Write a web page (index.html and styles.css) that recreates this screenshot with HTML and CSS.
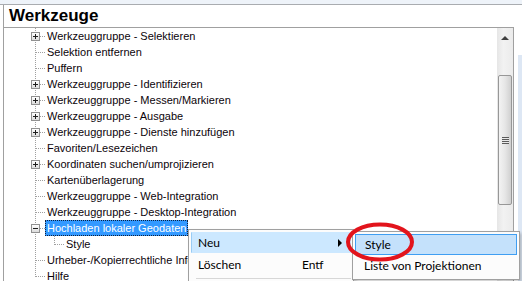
FILE: index.html
```html
<!DOCTYPE html>
<html>
<head>
<meta charset="utf-8">
<link rel="stylesheet" href="styles.css">
</head>
<body>
<div class="window">
  <div class="panel">
    <div class="title">Werkzeuge</div>
    <div class="treebox">
      <ul class="tree">
        <li class="row"><span class="conn"><span class="box plus"></span></span><span class="label">Werkzeuggruppe - Selektieren</span></li>
        <li class="row"><span class="conn"></span><span class="label">Selektion entfernen</span></li>
        <li class="row"><span class="conn"></span><span class="label">Puffern</span></li>
        <li class="row"><span class="conn"><span class="box plus"></span></span><span class="label">Werkzeuggruppe - Identifizieren</span></li>
        <li class="row"><span class="conn"><span class="box plus"></span></span><span class="label">Werkzeuggruppe - Messen/Markieren</span></li>
        <li class="row"><span class="conn"><span class="box plus"></span></span><span class="label">Werkzeuggruppe - Ausgabe</span></li>
        <li class="row"><span class="conn"><span class="box plus"></span></span><span class="label">Werkzeuggruppe - Dienste hinzufügen</span></li>
        <li class="row"><span class="conn"></span><span class="label">Favoriten/Lesezeichen</span></li>
        <li class="row"><span class="conn"><span class="box plus"></span></span><span class="label">Koordinaten suchen/umprojizieren</span></li>
        <li class="row"><span class="conn"></span><span class="label">Kartenüberlagerung</span></li>
        <li class="row"><span class="conn"></span><span class="label">Werkzeuggruppe - Web-Integration</span></li>
        <li class="row"><span class="conn"></span><span class="label">Werkzeuggruppe - Desktop-Integration</span></li>
        <li class="row"><span class="conn"><span class="box minus"></span></span><span class="label selected">Hochladen lokaler Geodaten</span></li>
        <li class="row"><span class="indent"></span><span class="conn last"></span><span class="label">Style</span></li>
        <li class="row"><span class="conn"></span><span class="label">Urheber-/Kopierrechtliche Informationen</span></li>
        <li class="row"><span class="conn last"></span><span class="label">Hilfe</span></li>
      </ul>
      <div class="scrollbar">
        <div class="sb-btn"><span class="sb-arrow"></span></div>
        <div class="sb-track"><div class="sb-thumb"><span class="grip"></span></div></div>
      </div>
    </div>
  </div>
  <div class="side"></div>
</div>

<div class="menu menu-main">
  <div class="item hot"><span class="text">Neu</span><span class="key"></span><span class="arrow"></span></div>
  <div class="item"><span class="text">Löschen</span><span class="key">Entf</span><span class="arrow none"></span></div>
  <div class="sep"></div>
</div>

<div class="menu menu-sub">
  <div class="item hot focus"><span class="text">Style</span></div>
  <div class="item"><span class="text">Liste von Projektionen</span></div>
</div>

<svg class="mark" width="80" height="50" viewBox="0 0 80 50">
  <ellipse cx="36" cy="21" rx="32" ry="17.5" fill="none" stroke="#e2141c" stroke-width="4"/>
</svg>
</body>
</html>
```

FILE: styles.css
```css
html, body {
  margin: 0;
  padding: 0;
}
body {
  width: 522px;
  height: 281px;
  overflow: hidden;
  position: relative;
  background: #eef3f9;
  font-family: "Liberation Sans", Arial, sans-serif;
  font-size: 11px;
  color: #000;
}
.window {
  margin-top: 4px;
  border-top: 1px solid #a9acb0;
  display: flex;
  height: 276px;
  background: #fff;
}
.panel {
  margin-left: 3px;
  border-left: 1px solid #a0a0a0;
  width: 514px;
  background: #fff;
  display: flex;
  flex-direction: column;
}
.side {
  flex: 1;
  background: linear-gradient(#fff 0 50px, #dde7f4 50px);
}
.title {
  height: 22px;
  line-height: 22px;
  padding-left: 5px;
  font-family: "Liberation Sans", Arial, sans-serif;
  font-weight: bold;
  font-size: 17px;
}
.treebox {
  flex: 1;
  margin-right: 4px;
  border-top: 1px solid #a0a0a0;
  border-right: 1px solid #a0a0a0;
  display: flex;
  overflow: hidden;
}
.tree {
  list-style: none;
  margin: 0;
  padding: 0 0 0 27px;
  flex: 1;
  overflow: hidden;
  font-family: "Liberation Sans", Arial, sans-serif;
  font-size: 11px;
  color: #0c040a;
}
.row {
  display: flex;
  height: 16px;
  white-space: nowrap;
}
.conn, .indent {
  flex: none;
  height: 16px;
}
.indent {
  width: 19px;
  background: repeating-linear-gradient(to bottom, #a0a0a0 0 1px, transparent 1px 2px) 4px 0 / 1px 100% no-repeat;
}
.conn {
  width: 14px;
  background:
    repeating-linear-gradient(to bottom, #a0a0a0 0 1px, transparent 1px 2px) 4px 0 / 1px 100% no-repeat,
    repeating-linear-gradient(to right, #a0a0a0 0 1px, transparent 1px 2px) 5px 8px / 9px 1px no-repeat;
}
.conn.last {
  background:
    repeating-linear-gradient(to bottom, #a0a0a0 0 1px, transparent 1px 2px) 4px 0 / 1px 9px no-repeat,
    repeating-linear-gradient(to right, #a0a0a0 0 1px, transparent 1px 2px) 5px 8px / 9px 1px no-repeat;
}
.box {
  display: block;
  box-sizing: border-box;
  width: 9px;
  height: 9px;
  margin-top: 4px;
  border: 1px solid #919191;
}
.box.plus {
  background:
    linear-gradient(#1e1e1e, #1e1e1e) center / 5px 1px no-repeat,
    linear-gradient(#1e1e1e, #1e1e1e) center / 1px 5px no-repeat,
    linear-gradient(#ffffff, #dcdcdc);
}
.box.minus {
  background:
    linear-gradient(#1e1e1e, #1e1e1e) center / 5px 1px no-repeat,
    linear-gradient(#ffffff, #dcdcdc);
}
.label {
  display: block;
  height: 16px;
  box-sizing: border-box;
  line-height: 14px;
  padding: 0 1px;
  border: 1px dotted transparent;
}
.label.selected {
  background: #3399ff;
  color: #fff;
  border-color: #10203a;
}
.scrollbar {
  width: 16px;
  flex: none;
  background: linear-gradient(to right, #e6e6e6, #f2f2f2 40%, #ebebeb);
  display: flex;
  flex-direction: column;
}
.sb-btn {
  height: 17px;
  display: flex;
  align-items: center;
  justify-content: center;
}
.sb-arrow {
  width: 0;
  height: 0;
  border-left: 4px solid transparent;
  border-right: 4px solid transparent;
  border-bottom: 4px solid #404040;
  margin-top: 2px;
}
.sb-track {
  padding-top: 30px;
}
.sb-thumb {
  margin: 0 1px;
  height: 130px;
  box-sizing: border-box;
  border: 1px solid #979797;
  border-radius: 2px;
  background: linear-gradient(to right, #f3f3f3, #e6e6e6 50%, #d0d0d0);
  display: flex;
  align-items: center;
  justify-content: center;
}
.grip {
  width: 7px;
  height: 7px;
  background: repeating-linear-gradient(to bottom, #5a5a5a 0 1px, #e8e8e8 1px 2px);
}
.menu {
  position: absolute;
  background: #fcfcfc;
  border: 1px solid #a0a0a0;
  box-sizing: border-box;
  font-family: "Lato", "Liberation Sans", sans-serif;
  font-size: 12px;
  color: #000;
  box-shadow: 2px 2px 3px rgba(0,0,0,0.2);
}
.menu-main {
  left: 188px;
  top: 229px;
  width: 166px;
  height: 60px;
  padding: 2px 2px 0;
}
.menu-main .item {
  display: grid;
  grid-template-columns: 1fr 34px 14px;
  align-items: center;
  height: 21px;
  box-sizing: border-box;
  padding-left: 6px;
  border: 1px solid transparent;
}
.menu-main .item + .item {
  height: 22px;
}
.item.hot {
  background: #cce8ff;
  border-color: #cce8ff;
  border-left-color: #99ccf5;
}
.arrow {
  width: 0;
  height: 0;
  border-top: 4px solid transparent;
  border-bottom: 4px solid transparent;
  border-left: 4px solid #000;
  margin-left: 2px;
}
.arrow.none {
  border: 0;
}
.sep {
  margin: 3px 0 0 5px;
  border-top: 1px solid #d7d7d7;
}
.menu-sub {
  left: 352px;
  top: 231px;
  width: 168px;
  height: 49px;
  padding: 2px 2px 0;
}
.menu-sub .item {
  height: 21px;
  box-sizing: border-box;
  line-height: 19px;
  padding-left: 9px;
  border: 1px solid transparent;
}
.menu-sub .item + .item {
  padding-left: 8px;
}
.item.hot.focus {
  background: #c4e1fb;
  border-color: #3f9ef2;
}
.mark {
  position: absolute;
  left: 344px;
  top: 221px;
}
```
